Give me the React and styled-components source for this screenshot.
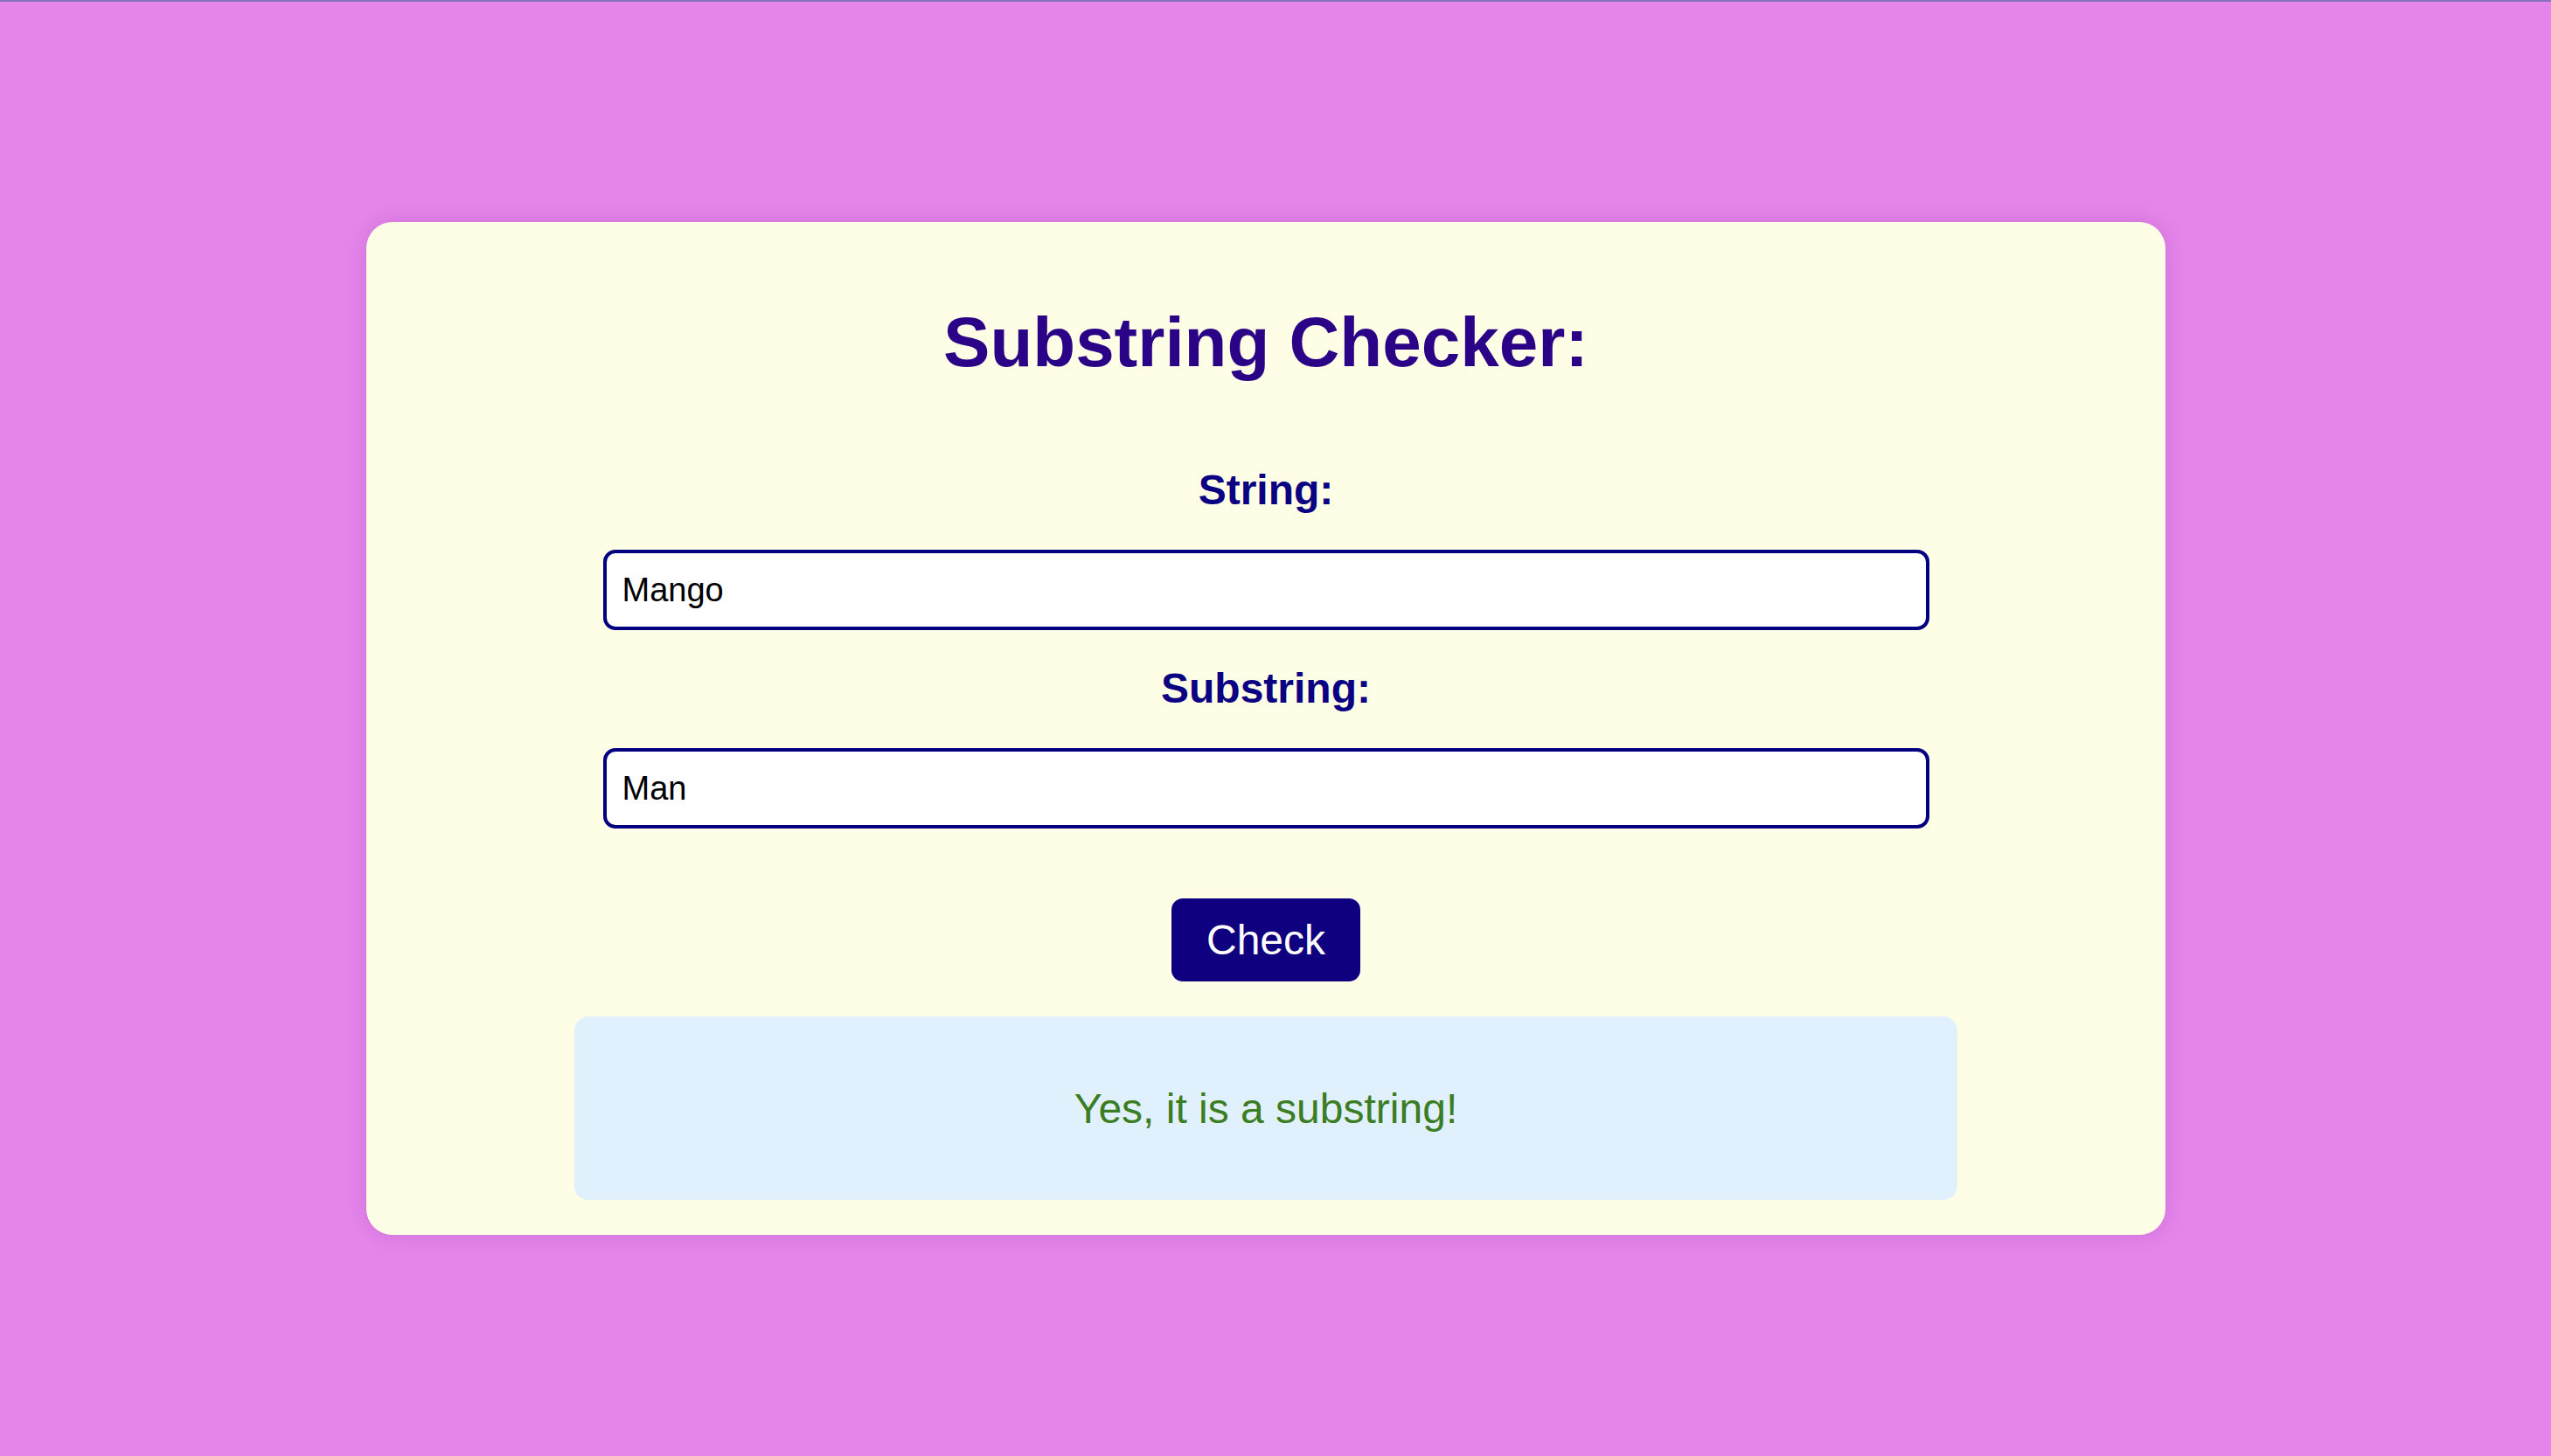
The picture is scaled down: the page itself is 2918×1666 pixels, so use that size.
import React, { useState } from "react";
import styled, { createGlobalStyle } from "styled-components";

const GlobalStyle = createGlobalStyle`
	html, body {
		margin: 0;
		padding: 0;
		background: #e585ec;
		font-family: "Liberation Sans", Arial, sans-serif;
	}
`;

const Page = styled.div`
	min-height: 1666px;
	box-sizing: border-box;
	border-top: 2px solid #8b72c1;
	padding: 252px 22px 0 0;
	display: flex;
	justify-content: center;
	align-items: flex-start;
`;

const Card = styled.div`
	width: 2058px;
	box-sizing: border-box;
	padding: 92px 40px 40px;
	background: #fefee6;
	border-radius: 30px;
	box-shadow: 0 0 22px rgba(80, 0, 90, 0.16);
	display: flex;
	flex-direction: column;
	align-items: center;
`;

const Title = styled.h1`
	margin: 0 0 95px;
	font-size: 80px;
	line-height: 92px;
	font-weight: 700;
	color: #2b0386;
`;

const Form = styled.div`
	display: flex;
	flex-direction: column;
	align-items: center;
	gap: 39px;
`;

const Field = styled.div`
	display: flex;
	flex-direction: column;
	align-items: center;
	gap: 41px;
`;

const Label = styled.label`
	font-size: 48px;
	line-height: 55px;
	font-weight: 700;
	color: #0a0282;
`;

const Input = styled.input`
	width: 1517px;
	height: 92px;
	box-sizing: border-box;
	padding: 0 18px;
	border: 4px solid #000080;
	border-radius: 14px;
	background: #fff;
	font-family: "Liberation Sans", Arial, sans-serif;
	font-size: 38px;
	color: #000;
	outline: none;
`;

const Button = styled.button`
	margin-top: 80px;
	padding: 20px 40px;
	border: none;
	border-radius: 13px;
	background: #0f0080;
	color: #fff;
	font-family: "Liberation Sans", Arial, sans-serif;
	font-size: 48px;
	line-height: 55px;
	cursor: pointer;
`;

const Result = styled.div`
	margin-top: 40px;
	width: 1582px;
	box-sizing: border-box;
	padding: 78px 0 77px;
	border-radius: 16px;
	background: #e1f0fd;
	text-align: center;
	font-size: 48px;
	line-height: 55px;
	color: ${props => (props.ok ? "#3b7d23" : "#b3261e")};
`;

export default function App() {
	const [text, setText] = useState("Mango");
	const [sub, setSub] = useState("Man");
	const [found, setFound] = useState(true);

	return (
		<>
			<GlobalStyle />
			<Page>
				<Card>
					<Title>Substring Checker:</Title>
					<Form>
						<Field>
							<Label htmlFor="str">String:</Label>
							<Input id="str" value={text} onChange={e => setText(e.target.value)} />
						</Field>
						<Field>
							<Label htmlFor="sub">Substring:</Label>
							<Input id="sub" value={sub} onChange={e => setSub(e.target.value)} />
						</Field>
					</Form>
					<Button onClick={() => setFound(text.includes(sub))}>Check</Button>
					<Result ok={found}>
						{found ? "Yes, it is a substring!" : "No, it is not a substring."}
					</Result>
				</Card>
			</Page>
		</>
	);
}
